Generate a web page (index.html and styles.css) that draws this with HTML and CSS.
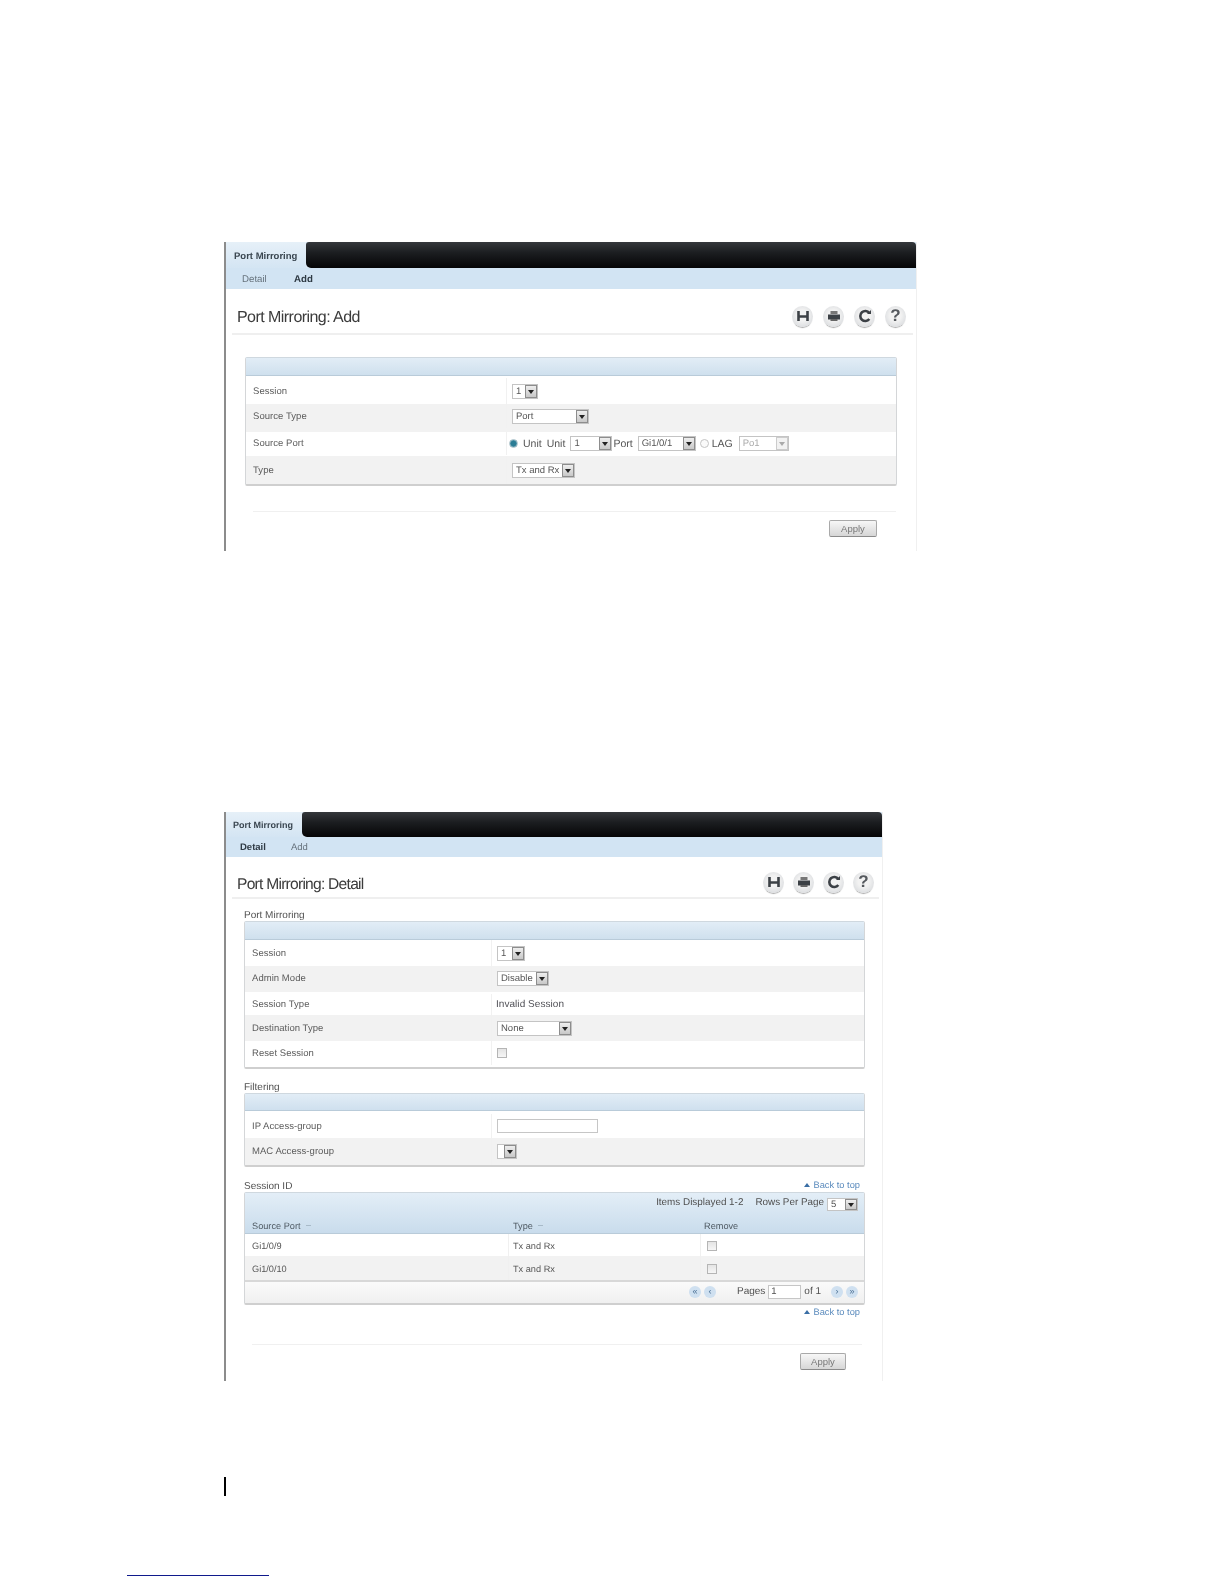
FILE: index.html
```html
<!DOCTYPE html>
<html lang="en">
<head>
<meta charset="utf-8">
<title>Port Mirroring</title>
<link rel="stylesheet" href="styles.css">
</head>
<body>
<main class="page">

<section class="panel panel-add">
  <div class="tabbar"><div class="tab tab-add">Port Mirroring</div><div class="tabfill"></div></div>
  <nav class="subnav sn-add"><span class="sub-a">Detail</span><span class="sub-b on">Add</span></nav>
  <header class="titlebar tb-add">
    <h1>Port Mirroring: Add</h1>
    <div class="tools tools-add">
      <span class="tool"><svg viewBox="0 0 20 20"><path d="M5.5 5v10M14.5 5v10M5.5 10.5h9" fill="none" stroke="#3c4146" stroke-width="2.6"/></svg></span>
      <span class="tool"><svg viewBox="0 0 20 20"><path d="M6.5 5h7v3h-7z" fill="#777"/><path d="M4 8.5h12v5H4z" fill="#3c4146"/><path d="M6.5 13h7v2h-7z" fill="#666"/></svg></span>
      <span class="tool"><svg viewBox="0 0 20 20"><path d="M14.3 7A5 5 0 1 0 14.3 13" fill="none" stroke="#3c4146" stroke-width="2.6"/><path d="M12 8h4V4z" fill="#3c4146"/></svg></span>
      <span class="tool tool-q">?</span>
    </div>
  </header>
  <div class="box box-add">
    <div class="box-head h18"></div>
    <div class="row h28 c262 pt2"><div class="lab">Session</div><div class="val"><span class="sel w26"><span class="sv">1</span><span class="sb"></span></span></div></div>
    <div class="row h28 c262 alt pb4"><div class="lab">Source Type</div><div class="val"><span class="sel w77"><span class="sv">Port</span><span class="sb"></span></span></div></div>
    <div class="row h24 c262 pb1"><div class="lab">Source Port</div>
      <div class="val val-tight">
        <span class="radio on"></span><span class="big m-r5">Unit</span><span class="big m-r5">Unit</span>
        <span class="sel w42"><span class="sv">1</span><span class="sb"></span></span><span class="big m-l2 m-r5">Port</span>
        <span class="sel w58"><span class="sv">Gi1/0/1</span><span class="sb"></span></span>
        <span class="radio radio-lag"></span><span class="big m-r6">LAG</span>
        <span class="sel w50 dis"><span class="sv">Po1</span><span class="sb"></span></span>
      </div></div>
    <div class="row h28 c262 alt"><div class="lab">Type</div><div class="val"><span class="sel w63"><span class="sv">Tx and Rx</span><span class="sb"></span></span></div></div>
  </div>
  <div class="foot foot-add"><button class="apply">Apply</button></div>
</section>

<section class="panel panel-detail">
  <div class="tabbar"><div class="tab tab-detail">Port Mirroring</div><div class="tabfill"></div></div>
  <nav class="subnav sn-detail"><span class="sub-a on">Detail</span><span class="sub-b">Add</span></nav>
  <header class="titlebar tb-detail">
    <h1>Port Mirroring: Detail</h1>
    <div class="tools tools-detail">
      <span class="tool"><svg viewBox="0 0 20 20"><path d="M5.5 5v10M14.5 5v10M5.5 10.5h9" fill="none" stroke="#3c4146" stroke-width="2.6"/></svg></span>
      <span class="tool"><svg viewBox="0 0 20 20"><path d="M6.5 5h7v3h-7z" fill="#777"/><path d="M4 8.5h12v5H4z" fill="#3c4146"/><path d="M6.5 13h7v2h-7z" fill="#666"/></svg></span>
      <span class="tool"><svg viewBox="0 0 20 20"><path d="M14.3 7A5 5 0 1 0 14.3 13" fill="none" stroke="#3c4146" stroke-width="2.6"/><path d="M12 8h4V4z" fill="#3c4146"/></svg></span>
      <span class="tool tool-q">?</span>
    </div>
  </header>

  <div class="sect s22"><span>Port Mirroring</span></div>
  <div class="box">
    <div class="box-head h18"></div>
    <div class="row h26 c248"><div class="lab">Session</div><div class="val"><span class="sel w28"><span class="sv">1</span><span class="sb"></span></span></div></div>
    <div class="row h26 c248 alt pb2"><div class="lab">Admin Mode</div><div class="val"><span class="sel w52"><span class="sv">Disable</span><span class="sb"></span></span></div></div>
    <div class="row h23 c248 pt2"><div class="lab">Session Type</div><div class="val"><span class="plain">Invalid Session</span></div></div>
    <div class="row h26 c248 alt"><div class="lab">Destination Type</div><div class="val"><span class="sel w75"><span class="sv">None</span><span class="sb"></span></span></div></div>
    <div class="row h26 c248 pb2"><div class="lab">Reset Session</div><div class="val"><span class="check"></span></div></div>
  </div>

  <div class="sect s24"><span>Filtering</span></div>
  <div class="box">
    <div class="box-head h17"></div>
    <div class="row h27 c248 pt3"><div class="lab">IP Access-group</div><div class="val"><span class="input w101"></span></div></div>
    <div class="row h27 c248 alt"><div class="lab">MAC Access-group</div><div class="val"><span class="sel w20"><span class="sv"></span><span class="sb"></span></span></div></div>
  </div>

  <div class="sect s25"><span>Session ID</span><a class="top">Back to top</a></div>
  <div class="box">
    <div class="box-head h41 thead">
      <div class="pager-top"><span class="ptxt">Items Displayed 1-2</span><span class="ptxt rpp">Rows Per Page</span><span class="sel w31 rpp-sel"><span class="sv">5</span><span class="sb"></span></span></div>
      <div class="cols"><span class="col1">Source Port<i class="sort"></i></span><span class="col2h">Type<i class="sort"></i></span><span>Remove</span></div>
    </div>
    <div class="trow h22"><span class="col1">Gi1/0/9</span><span class="col2 sep">Tx and Rx</span><span class="col3 sep"><span class="check"></span></span></div>
    <div class="trow h24 alt"><span class="col1">Gi1/0/10</span><span class="col2 sep">Tx and Rx</span><span class="col3 sep"><span class="check"></span></span></div>
    <div class="pagebar">
      <span class="pg">«</span><span class="pg">‹</span>
      <span class="pages">Pages</span><span class="input w33 pginput">1</span><span class="ofn">of 1</span>
      <span class="pg">›</span><span class="pg">»</span>
    </div>
  </div>
  <div class="after-box"><a class="top">Back to top</a></div>
  <div class="foot foot-detail"><button class="apply ap46">Apply</button></div>
</section>

<footer class="pagefoot">
  <div class="barrow"><span class="vbar"></span></div>
  <div class="noteline"></div>
</footer>
</main>
</body>
</html>
```
FILE: styles.css
```css
* { box-sizing: border-box; }
html, body { margin: 0; padding: 0; background: #fff; }
body { font-family: "Liberation Sans", Arial, sans-serif; color: #555; font-size: 10px; text-rendering: geometricPrecision; }
.page { padding: 242px 0 0 127px; height: 1584px; overflow: hidden; }

.panel { margin-left: 97px; border-left: 2px solid #8c8c8c; border-right: 1px solid #f0f0f0; filter: blur(.6px); }
.panel-add { width: 693px; height: 309px; margin-bottom: 261px; }
.panel-detail { width: 659px; height: 569px; }

.tabbar { display: flex; height: 26px; background: #d9e8f5; }
.panel-detail .tabbar { height: 25px; }
.tab { font-weight: bold; color: #3a4650; background: linear-gradient(#e6f0f8, #d4e5f3); }
.tab-add { width: 80px; font-size: 9.5px; padding: 9px 0 0 8px; }
.tab-detail { width: 76px; font-size: 9px; padding: 8px 0 0 7px; }
.tabfill { flex: 1; background: linear-gradient(#35383c 0, #1c1e21 40%, #050506 100%); border-radius: 3px 4px 0 5px; }

.subnav { height: 21px; background: #d2e4f3; display: flex; align-items: center; color: #66727c; }
.sn-add { font-size: 9.7px; padding-top: 2px; }
.sn-add .sub-a { margin-left: 16px; width: 52px; }
.sn-detail { height: 20px; font-size: 9.5px; padding-top: 1px; }
.sub-a { margin-left: 14px; width: 51px; }
.subnav .on { font-weight: bold; color: #2f3a44; }

.titlebar { display: flex; align-items: center; justify-content: space-between; margin: 0 3px 0 6px; border-bottom: 2px solid #efefef; padding-left: 5px; }
.tb-add { height: 46px; padding-top: 10px; }
.tb-detail { height: 42px; padding-top: 10px; }
h1 { margin: 4px 0 0; font-weight: normal; font-size: 16px; letter-spacing: -.55px; color: #3b3b3b; }
.tb-detail h1 { margin-top: 5px; font-size: 15.6px; letter-spacing: -.75px; }
.tools { display: flex; }
.tools-add { gap: 10px; margin-right: 7px; }
.tools-detail { gap: 9px; margin-right: 5px; }
.tool { width: 21px; height: 21px; border-radius: 50%; background: radial-gradient(circle at 50% 45%, #f2f2f2 35%, #cfd2d6 100%); box-shadow: 0 2px 1px -1px #aaa; display: flex; align-items: center; justify-content: center; }
.tool svg { width: 20px; height: 20px; display: block; }
.tool-q { font-size: 17px; font-weight: bold; color: #55595e; }

.box { margin: 0 0 0 18px; width: 621px; border: 1px solid #d4d6d8; border-top-color: #cfd8df; border-bottom: 2px solid #cfcfcf; border-radius: 2px; background: #fff; }
.box-add { margin: 22px 0 0 19px; width: 652px; }
.box-head { background: linear-gradient(#e2edf6, #cfe0ee); border-bottom: 1px solid #b9cbd9; }
.h17 { height: 17px; } .h18 { height: 18px; } .h41 { height: 41px; }
.h22 { height: 22px; } .h23 { height: 23px; } .h24 { height: 24px; } .h26 { height: 26px; } .h27 { height: 27px; } .h28 { height: 28px; }

.row { display: grid; align-items: stretch; font-size: 9.5px; letter-spacing: .05px; }
.pb1 { padding-bottom: 1px; } .pb2 { padding-bottom: 2px; } .pb4 { padding-bottom: 4px; }
.pt2 { padding-top: 2px; } .pt3 { padding-top: 3px; }
.c262 { grid-template-columns: 261px 1fr; }
.c248 { grid-template-columns: 247px 1fr; }
.alt { background: #f2f2f2; }
.lab { display: flex; align-items: center; padding-left: 7px; color: #5c5c5c; border-right: 1px solid #f1f1f1; }
.val { display: flex; align-items: center; padding-left: 5px; }
.val-tight { padding-left: 2px; }
.plain { margin-left: -1px; color: #4f4f55; font-size: 10px; }

.sel { display: inline-flex; align-items: stretch; height: 15px; border: 1px solid #c4c4c4; background: #fff; color: #555; font-size: 9.5px; letter-spacing: 0; }
.sv { flex: 1; padding-left: 3px; line-height: 13px; overflow: hidden; white-space: nowrap; }
.sb { width: 12px; background: linear-gradient(#eee, #c8c8c8); border: 1px solid #8d8d8d; position: relative; }
.sb::after { content: ""; position: absolute; left: 2px; top: 4px; border: 3px solid transparent; border-top: 4px solid #222; border-bottom: 0; }
.dis { color: #aaa; }
.dis .sb { background: #f2f2f2; border-color: #ccc; }
.dis .sb::after { border-top-color: #aaa; }
.w20 { width: 20px; } .w26 { width: 26px; } .w28 { width: 28px; } .w31 { width: 31px; } .w42 { width: 42px; } .w50 { width: 50px; } .w52 { width: 52px; } .w58 { width: 58px; } .w63 { width: 63px; } .w75 { width: 75px; } .w77 { width: 77px; }
.w33 { width: 33px; } .w101 { width: 101px; }
.radio { width: 9px; height: 9px; border-radius: 50%; border: 1px solid #c4c4c4; background: #fafafa; margin-right: 5px; flex: none; }
.radio.on { background: radial-gradient(circle, #2b7d95 45%, #9cc4d0 100%); border-color: #a8c0c8; }
.radio-lag { margin-left: 4px; margin-right: 3px; }
.big { font-size: 10.5px; color: #555; letter-spacing: 0; }
.m-r5 { margin-right: 5px; } .m-r6 { margin-right: 6px; } .m-l2 { margin-left: 1px; }
.check { width: 10px; height: 10px; border: 1px solid #b5b5b5; background: linear-gradient(#e4e4e4, #f6f6f6); display: inline-block; }
.input { display: inline-block; height: 14px; border: 1px solid #c6c6c6; background: #fff; }

.sect { display: flex; align-items: flex-end; justify-content: space-between; margin-left: 18px; width: 621px; font-size: 10px; color: #505050; }
.sect > span:first-child { line-height: 10px; }
.sect .top { margin-bottom: 2px; }
.s22 { height: 22px; } .s24 { height: 24px; } .s25 { height: 25px; }
.top { color: #5b8bbd; font-size: 9.3px; padding-right: 5px; line-height: 10px; }
.top::before { content: ""; display: inline-block; border: 3px solid transparent; border-bottom: 4px solid #3a6ea5; border-top: 0; margin-right: 3px; vertical-align: 1px; }

.thead { display: flex; flex-direction: column; background: linear-gradient(#e3eef7, #c9dcec); }
.pager-top { height: 20px; display: flex; align-items: center; justify-content: flex-end; padding: 3px 6px 0 0; font-size: 9.9px; color: #4f4f4f; }
.ptxt { margin-bottom: 4px; }
.rpp { margin-left: 12px; margin-right: 3px; }
.rpp-sel { height: 13px; }
.rpp-sel .sv { line-height: 11px; }
.rpp-sel .sb::after { top: 3px; }
.cols { flex: 1; display: flex; align-items: center; font-size: 9.2px; color: #4f5a63; padding-top: 5px; }
.col1 { width: 263px; padding-left: 7px; }
.col2h { width: 196px; padding-left: 5px; }
.col2 { width: 192px; padding-left: 4px; }
.col3 { padding-left: 6px; }
.sort { display: inline-block; margin-left: 5px; width: 5px; height: 1px; background: #a8bac8; vertical-align: 3px; }
.trow { display: flex; align-items: center; font-size: 9.2px; color: #565656; }
.trow > span { height: 100%; display: flex; align-items: center; padding-top: 2px; }
.sep { border-left: 1px solid #f0f0f0; }
.pagebar { height: 23px; display: flex; align-items: center; border-top: 2px solid #d8d8d8; background: linear-gradient(#fafafa, #f0f0f0); padding: 0 0 2px 444px; font-size: 10px; color: #505050; }
.pg { width: 12px; height: 12px; border-radius: 50%; background: #cfe0f0; color: #4a6f94; font-size: 9px; line-height: 11px; text-align: center; margin-right: 3px; flex: none; }
.pages { margin-left: 18px; margin-right: 3px; }
.pginput { font-size: 9.5px; padding-left: 2px; line-height: 12px; }
.ofn { margin-left: 3px; margin-right: 10px; }

.after-box { display: flex; justify-content: flex-end; margin-left: 18px; width: 621px; height: 13px; }
.after-box .top { line-height: 15px; }
.foot { display: flex; justify-content: flex-end; border-top: 1px solid #f0f0f0; }
.foot-add { margin: 25px 20px 0 27px; padding: 8px 19px 0 0; }
.foot-detail { margin: 26px 20px 0 26px; padding: 8px 16px 0 0; }
.apply { width: 48px; height: 17px; padding: 0; font: 9.5px "Liberation Sans", Arial, sans-serif; color: #777; border: 1px solid #a9a9a9; border-bottom-color: #8a8a8a; border-radius: 2px; background: linear-gradient(#f7f7f7, #d6d6d6); }
.ap46 { width: 46px; }

.pagefoot { padding-top: 96px; }
.barrow { padding-left: 97px; height: 98px; }
.vbar { display: block; width: 2px; height: 19px; background: #000; }
.noteline { width: 142px; height: 1px; background: #101a8c; }
```
